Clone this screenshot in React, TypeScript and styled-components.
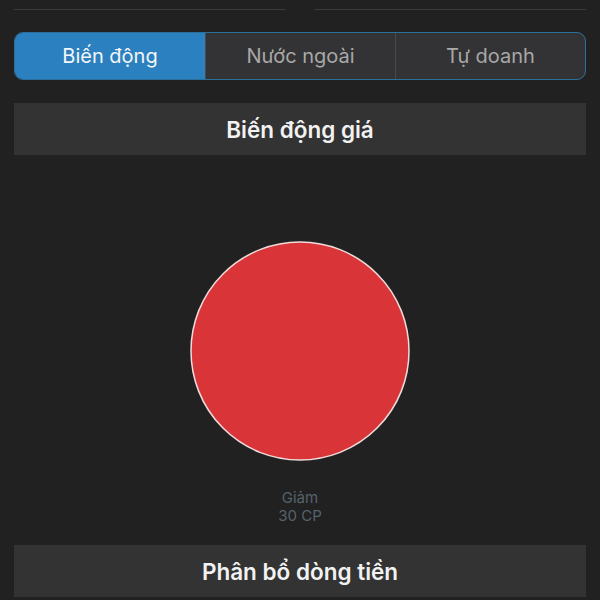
import React from "react";
import styled, { createGlobalStyle } from "styled-components";

const Global = createGlobalStyle`
  html, body { margin: 0; padding: 0; background: #212121; }
  body { font-family: Inter, Roboto, "Noto Sans", "Liberation Sans", sans-serif; }
`;

const Page = styled.div`
  width: 600px;
  height: 600px;
  overflow: hidden;
  background: #212121;
  padding: 0 14px;
  box-sizing: border-box;
  display: flex;
  flex-direction: column;
`;

const FieldRow = styled.div`
  display: grid;
  grid-template-columns: 1fr 1fr;
  gap: 28px;
  height: 11px;
`;

const Field = styled.div`
  border-bottom: 1px solid #3a3a3a;
  height: 9px;
`;

const Segmented = styled.div`
  margin-top: 21px;
  height: 48px;
  display: grid;
  grid-template-columns: 1fr 1fr 1fr;
  border: 1.5px solid #2c6f9a;
  border-radius: 9px;
  overflow: hidden;
  box-sizing: border-box;
  background: #333335;
`;

const Segment = styled.div<{ $active?: boolean }>`
  display: flex;
  align-items: center;
  justify-content: center;
  font-size: 20px;
  color: ${(p) => (p.$active ? "#f4f6f8" : "#a8a8a8")};
  background: ${(p) => (p.$active ? "#2b80bf" : "transparent")};
  & + & {
    border-left: 1px solid #4a4a4c;
  }
`;

const SectionHeader = styled.div<{ $top: number }>`
  margin-top: ${(p) => p.$top}px;
  height: 52px;
  flex-shrink: 0;
  background: #333333;
  display: flex;
  align-items: center;
  justify-content: center;
  color: #f2f2f2;
  font-size: 22.5px;
  font-weight: 600;
`;

const Chart = styled.div`
  height: 390px;
  display: flex;
  flex-direction: column;
  align-items: center;
`;

const Pie = styled.svg`
  margin-top: 85px;
  display: block;
`;

const Legend = styled.div`
  margin-top: 27px;
  display: flex;
  flex-direction: column;
  align-items: center;
  color: #56616c;
  font-size: 15px;
  line-height: 18px;
`;

export default function App() {
  return (
    <>
      <Global />
      <Page>
        <FieldRow>
          <Field />
          <Field />
        </FieldRow>
        <Segmented>
          <Segment $active>Biến động</Segment>
          <Segment>Nước ngoài</Segment>
          <Segment>Tự doanh</Segment>
        </Segmented>
        <SectionHeader $top={23}>Biến động giá</SectionHeader>
        <Chart>
          <Pie width="222" height="222" viewBox="0 0 222 222">
            <circle cx="111" cy="111" r="109" fill="#d93538" stroke="#f0dcdc" strokeWidth="1.5" />
          </Pie>
          <Legend>
            <span>Giảm</span>
            <span>30 CP</span>
          </Legend>
        </Chart>
        <SectionHeader $top={0}>Phân bổ dòng tiền</SectionHeader>
      </Page>
    </>
  );
}
